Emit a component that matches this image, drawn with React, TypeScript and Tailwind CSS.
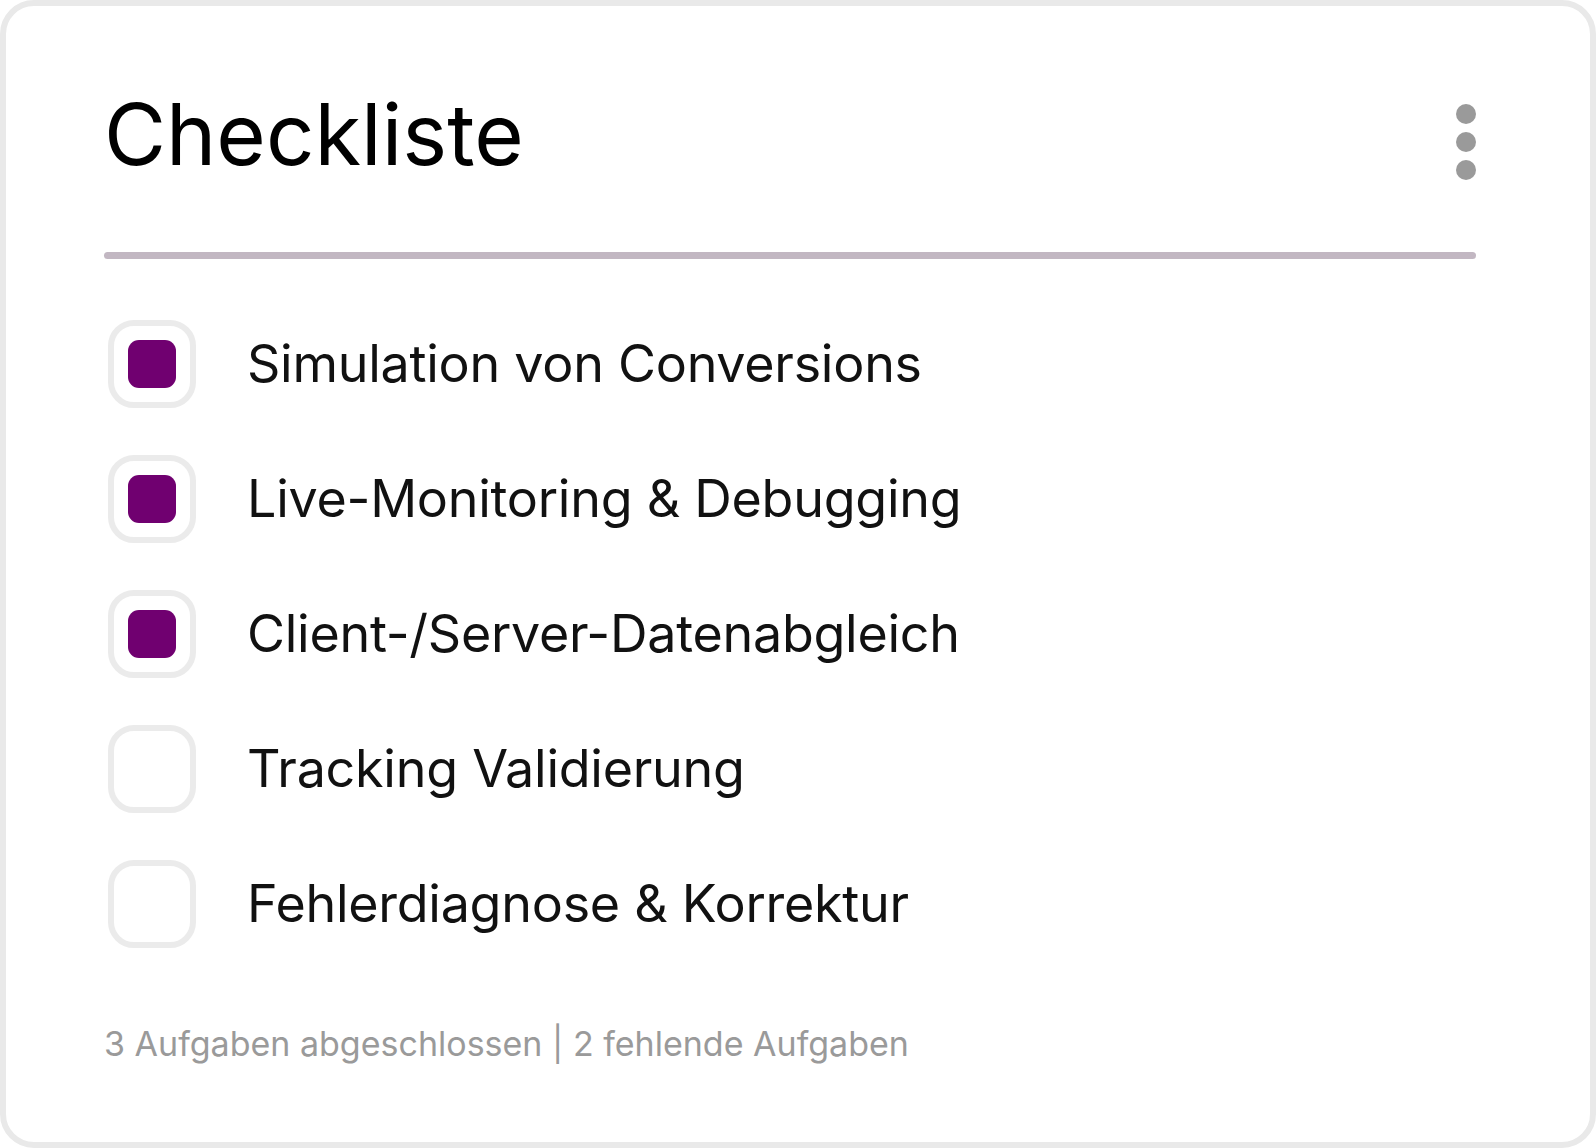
const items = [
  { label: "Simulation von Conversions", done: true },
  { label: "Live-Monitoring & Debugging", done: true },
  { label: "Client-/Server-Datenabgleich", done: true },
  { label: "Tracking Validierung", done: false },
  { label: "Fehlerdiagnose & Korrektur", done: false },
];

function CheckBox({ checked }: { checked: boolean }) {
  return (
    <div className="flex size-[88px] shrink-0 items-center justify-center rounded-[26px] border-[6px] border-[#ebebeb] bg-white">
      {checked ? <div className="size-[48px] rounded-[11px] bg-[#700070]" /> : null}
    </div>
  );
}

export default function App() {
  const doneCount = items.filter((i) => i.done).length;
  const openCount = items.length - doneCount;

  return (
    <div className="flex h-screen w-full bg-white font-['Inter',sans-serif]">
      <div className="flex flex-1 flex-col rounded-[34px] border-[6px] border-[#e9e9e9] bg-white pl-[98px] pr-[114px] pt-[86px]">
        <div className="flex items-start justify-between">
          <h1 className="text-[85px] font-normal leading-none text-black">Checkliste</h1>
          <button type="button" aria-label="Mehr Optionen" className="mt-[12px] flex flex-col gap-[8px]">
            <span className="size-[20px] rounded-full bg-[#9a9a9a]" />
            <span className="size-[20px] rounded-full bg-[#9a9a9a]" />
            <span className="size-[20px] rounded-full bg-[#9a9a9a]" />
          </button>
        </div>

        <div className="mt-[72px] h-[7px] rounded-full bg-[#c2b7c2]" />

        <ul className="mt-[61px] flex flex-col gap-[47px] pl-[4px]">
          {items.map((item) => (
            <li key={item.label} className="flex items-center gap-[51px]">
              <CheckBox checked={item.done} />
              <span className="text-[52px] leading-none tracking-[-0.005em] text-[#111111]">{item.label}</span>
            </li>
          ))}
        </ul>

        <p className="mt-[79px] text-[34px] leading-none text-[#9a9a9a]">
          {doneCount} Aufgaben abgeschlossen | {openCount} fehlende Aufgaben
        </p>
      </div>
    </div>
  );
}
